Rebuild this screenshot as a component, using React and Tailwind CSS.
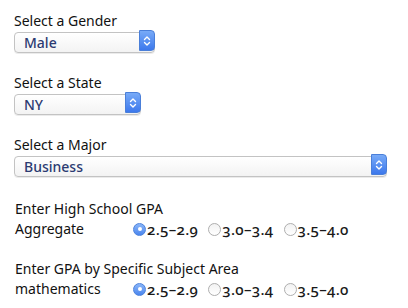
import React, { useState } from 'react';

const font = { fontFamily: '"Noto Sans", "Open Sans", sans-serif' };

const Chevrons = () => (
   <svg width="8" height="12" viewBox="0 0 8 12" fill="none">
      <path d="M1.5 4.5 L4 2 L6.5 4.5" stroke="white" strokeWidth="1.4" strokeLinecap="round" strokeLinejoin="round" />
      <path d="M1.5 7.5 L4 10 L6.5 7.5" stroke="white" strokeWidth="1.4" strokeLinecap="round" strokeLinejoin="round" />
   </svg>
);

const SelectBox = ({ label, value, options, onChange, width }) => (
   <div className="mt-[23px] first:mt-0">
      <div className="text-[14px] leading-[18px] text-[#111]">{label}</div>
      <div className={`relative h-[21px] ${width}`}>
         <select
            value={value}
            onChange={(e) => onChange(e.target.value)}
            className="h-full w-full appearance-none rounded-[4px] border border-[#c3c3c3] bg-gradient-to-b from-white to-[#f3f3f3] pl-[9px] pr-[20px] text-[14px] font-medium leading-[19px] text-[#2c3b72] outline-none shadow-[0_1px_0_rgba(0,0,0,0.08)]"
            style={font}
         >
            {options.map((o) => (
               <option key={o}>{o}</option>
            ))}
         </select>
         <span className="pointer-events-none absolute right-0 top-0 flex h-[21px] w-[16px] items-center justify-center rounded-r-[4px] bg-gradient-to-b from-[#78aaf7] to-[#3d78ec] border border-[#4a7fd9]">
            <Chevrons />
         </span>
      </div>
   </div>
);

const Radio = ({ checked, onClick, children }) => (
   <label className="mr-[10px] flex cursor-pointer items-center" onClick={onClick}>
      {checked ? (
         <span className="flex h-[13px] w-[13px] items-center justify-center rounded-full border border-[#4d82dc] bg-gradient-to-b from-[#8bb6f8] to-[#4a85ee]">
            <span className="h-[4px] w-[4px] rounded-full bg-white" />
         </span>
      ) : (
         <span className="h-[13px] w-[13px] rounded-full border border-[#aeaeae] bg-gradient-to-b from-[#f2f2f2] to-white" />
      )}
      <span className="ml-[1px] text-[15px] font-medium tracking-[0.3px] oldstyle-nums text-[#1a1a1a]">{children}</span>
   </label>
);

const RadioRow = ({ name, value, onChange }) => {
   const ranges = ['2.5–2.9', '3.0–3.4', '3.5–4.0'];
   return (
      <div className="flex h-[20px] items-center">
         <div className="w-[118px] shrink-0 text-[14px] leading-[20px] text-[#111]">{name}</div>
         {ranges.map((r) => (
            <Radio key={r} checked={value === r} onClick={() => onChange(r)}>
               {r}
            </Radio>
         ))}
      </div>
   );
};

const App = () => {
   const [gender, setGender] = useState('Male');
   const [state, setState] = useState('NY');
   const [major, setMajor] = useState('Business');
   const [aggregate, setAggregate] = useState('2.5–2.9');
   const [math, setMath] = useState('2.5–2.9');

   return (
      <div className="min-h-screen bg-white pl-[14px] pt-[12px]" style={font}>
         <SelectBox label="Select a Gender" value={gender} onChange={setGender} options={['Male', 'Female']} width="w-[141px]" />
         <SelectBox label="Select a State" value={state} onChange={setState} options={['NY', 'CA', 'NJ', 'TX']} width="w-[127px]" />
         <SelectBox label="Select a Major" value={major} onChange={setMajor} options={['Business', 'Engineering', 'Nursing']} width="w-[373px]" />

         <div className="mt-[24px] pl-[1px]">
            <div className="text-[14px] leading-[20px] text-[#111]">Enter High School GPA</div>
            <RadioRow name="Aggregate" value={aggregate} onChange={setAggregate} />
            <div className="mt-[20px] text-[14px] leading-[20px] text-[#111]">Enter GPA by Specific Subject Area</div>
            <RadioRow name="mathematics" value={math} onChange={setMath} />
         </div>
      </div>
   );
};

export default App;
